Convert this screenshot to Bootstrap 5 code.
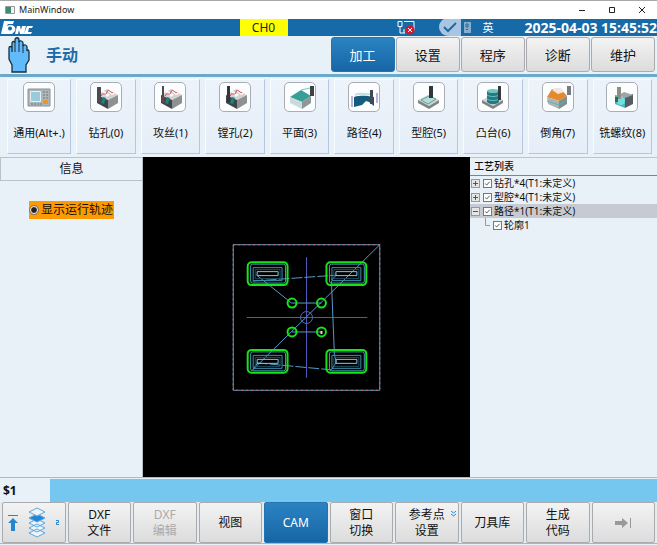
<!DOCTYPE html>
<html lang="zh-CN">
<head>
<meta charset="utf-8">
<meta name="viewport" content="width=device-width, initial-scale=1">
<title>MainWindow</title>
<link href="https://cdn.jsdelivr.net/npm/bootstrap@5.3.0/dist/css/bootstrap.min.css" rel="stylesheet">
<style>
body{font-family:"Noto Sans","Noto Sans CJK SC",sans-serif;font-size:12px;line-height:16px;color:#111;background:#e8f0f8}
svg{display:block}
button{font-family:inherit}
.window{padding-bottom:1px}
.titlebar{height:19px;background:#fff;border-top:1px solid #aaa;font-size:9px;padding:0 10px 0 5px;color:#222}
.titlebar button,.expander{background:none;border:0;padding:0}
.titlebar .controls{gap:20px}
.statusbar{height:17px;background:#176aa8;color:#fff}
.side{flex:1 1 0}
.channel{background:#ff0;color:#222;width:48px;font-size:12px;line-height:17px;margin-right:41px}
.clock{font-size:14px;font-weight:700;line-height:17px}
.ime{font-size:11px;margin:0 31px 0 10px}
.modebar{height:41px;border-bottom:3px solid #6aa9c9;padding:1px 2px 2px 6px}
.mode{font-family:"Noto Sans CJK SC",sans-serif;font-size:16px;font-weight:700;color:#1d6ba8;margin:0 0 0 14px}
.tabs{gap:1px}
.key{flex:1 1 0;min-width:0;padding:0;border:1px solid #a9abae;border-radius:3px;background:linear-gradient(#f3f3f3,#dcdcdc);color:#111;font-size:13px;line-height:16px}
.key.active{background:linear-gradient(#2b83c2,#1766a5);border-color:#2374b1;color:#fff}
.key:disabled{color:#aaa}
.tools{height:80px;padding:2px 5px 3px 7px;gap:5px}
.tool{flex:1 1 0;min-width:0;padding:2px 0 0;border:1px solid;border-color:#f8fbff #b7c6df #b7c6df #f8fbff;background:linear-gradient(#edf3fa,#e5eef8);font-size:11px;color:#111;white-space:nowrap;gap:13px}
.tool:first-child{flex-grow:1.08}
.pic{width:32px;height:30px;border:1px solid #aaaeb3;border-radius:5px;background:#fcfdff}
.info{width:143px;border-right:1px solid #b4bcc4}
.info h2{font-size:12px;line-height:22px;margin:0;border:1px solid #b9c1ca;border-right:0;text-align:center;font-weight:400}
.track{background:#f90;margin:20px 0 0 29px;padding:0 1px 0 0;height:18px;gap:2px}
.track input{appearance:none;width:8px;height:8px;border-radius:50%;background:#222;border:1px solid #fff;outline:1px solid #777;margin:0 1px}
.view{background:#000}
.tree{width:187px;font-size:10px}
.tree h2{font-size:10px;line-height:17px;padding-left:4px;margin:0;border-top:1px solid #bbc5cf;border-bottom:1px solid #7b858a}
.tree label{gap:1px}
.node{height:14px;gap:2px;padding-left:1px}
.node.selected{background:#c6cad2}
.expander{width:9px;height:9px;background:#e5e5e5;border:1px solid #999}
.tree input{appearance:none;width:9px;height:9px;margin:0 1px;border:1px solid #777;background:#fff url("data:image/svg+xml,%3Csvg xmlns='http://www.w3.org/2000/svg' viewBox='0 0 8 8'%3E%3Cpath d='M1.5 4 3 5.8 6.5 2' fill='none' stroke='%23444'/%3E%3C/svg%3E")}
.branch{padding-left:13px}
.command{height:25px;border-top:1px solid #b1b8bd;padding-top:1px}
.command label{width:50px;font-size:12px;font-weight:700;padding-left:3px}
.command input{background:#76c7ef;border:0;border-radius:0;height:23px;outline:0;min-width:0}
.softkeys{height:42px;background:#e6ebef;padding:0 2px;gap:2px;border-bottom:1px solid #b3b3b3}
.softkeys .key{font-size:12px;border-radius:2px}
.more{right:1px;top:8px}
</style>
<script src="https://cdn.jsdelivr.net/npm/bootstrap@5.3.0/dist/js/bootstrap.bundle.min.js"></script>
</head>
<body>
<svg width="0" height="0" class="position-absolute" aria-hidden="true">
<defs>
<g id="block"><path d="M4 11 14 5 25 11 15 16Z" fill="#d2d2d2"/><path d="M4 11 15 16V25L4 19Z" fill="#424547"/><path d="M15 16 25 11V19L15 25Z" fill="#8e9191"/><path d="M9 8 11 7 17 11 14 13ZM14 7 16 6 22 10 19 11Z" fill="#faf8f8"/><path d="M10 13 13 14 11 20 8 19Z" fill="#19857f"/><path d="M8 12C10 7 13 13 14 8S19 11 20 8" fill="none" stroke="#d8435b"/></g>
<g id="slab"><path d="M2 16 12 11 23 16 13 22Z" fill="#d0d3d0"/><path d="M2 16 13 22 23 16V19L13 25 2 19Z" fill="#7f8483"/></g>
<g id="pocket"><rect x="247" y="262" width="40" height="23" rx="4" stroke="#17e31b" stroke-width="2"/><rect x="250" y="264" width="35" height="19" rx="2" stroke="#4c9db1"/><path d="M252.500 267.500H281.500V280.500H252.500Z" stroke="#3f8fab"/><path d="M254.500 269.500H279.500V278.500H254.500Z" stroke="#1c4d60"/><path d="M256.500 271.500H277.500V275.500H256.500Z" stroke="#86c8e7"/></g>
</defs>
</svg>
<div class="window d-flex flex-column min-vh-100">
<header class="titlebar d-flex align-items-center">
<svg width="10" height="8" viewBox="0 0 10 8"><path fill="#f1f1f1" stroke="#999" d="M.5.5h9v7h-9z"/><path fill="#3c8b72" d="M1 1h5v6H1z"/></svg>
<span class="ms-1">MainWindow</span>
<div class="controls d-flex ms-auto">
<button aria-label="最小化"><svg width="10" height="8" viewBox="0 0 10 8" stroke="#222"><path d="M2 4.500h6"/></svg></button>
<button aria-label="最大化"><svg width="10" height="8" viewBox="0 0 10 8" fill="none" stroke="#222"><path d="M2.500 1.500h5v5h-5z"/></svg></button>
<button aria-label="关闭"><svg width="10" height="8" viewBox="0 0 10 8" stroke="#222"><path d="m2 1 6 6m0-6-6 6"/></svg></button>
</div>
</header>
<div class="statusbar d-flex">
<div class="w-50 d-flex">
<svg width="34" height="17" viewBox="0 0 34 17"><path fill="#fff" fill-rule="evenodd" d="M4 2h10l-1 3H8L7 7c5-3 10 1 8 5l-3 3H1zM8 9.500a2 2 0 1 0 4 0 2 2 0 0 0-4 0zM17 7h3l1 4 1-4h4l-2 8h-4l-1-4-1 4h-3zM27 7h6l-1 2h-3l-1 4h4l-1 2h-7z"/></svg>
<span class="channel text-center ms-auto">CH0</span>
</div>
<div class="w-50 d-flex align-items-center justify-content-end text-nowrap">
<svg width="18" height="15" viewBox="0 0 18 15" fill="none" stroke="#fff"><path d="M1 1.500h4v5H1zM7 1.500h10v9M3 7v6h5M7 9v4"/><circle cx="13" cy="10" r="4.500" fill="#d3172e" stroke="none"/><path d="m11 8 4 4m0-4-4 4"/></svg>
<svg class="ms-4" width="33" height="17" viewBox="0 0 33 17"><circle cx="9" cy="8" r="9" fill="#a9c5e1"/><path d="M10 0h12v17H10z" fill="#a9c5e1"/><path d="m5 8 4 4 8-8" fill="none" stroke="#1d6aa8" stroke-width="2"/><path d="M25 3h7v11h-7z" fill="#86adcc"/><path d="M27 5h2v3h-2zM27 10.500h2" stroke="#1d6aa8" fill="none"/></svg>
<span class="ime">英</span><time class="clock" datetime="2025-04-03T15:45:52">2025-04-03 15:45:52</time>
</div>
</div>
<div class="modebar d-flex">
<div class="side d-flex align-items-center">
<svg width="26" height="36" viewBox="0 0 26 36"><path d="M6 35V28L3 22V11c0-2 3-2 3 0v4-9c0-2 3-2 3 0v-3c0-3 4-3 4 0v2c1-2 4-1 4 1v3c1-2 4-1 4 1v4c1-2 2-1 2 1v8l-3 5v7z" fill="#61bafa" stroke="#182f3d" stroke-width="1.300"/><path d="M9 6v9M13 4v11M17 8v8" stroke="#182f3d"/></svg>
<h1 class="mode">手动</h1>
</div>
<nav class="tabs side d-flex" aria-label="模式">
<button class="key active">加工</button><button class="key">设置</button><button class="key">程序</button><button class="key">诊断</button><button class="key">维护</button>
</nav>
</div>
<nav class="tools d-flex" aria-label="工艺">
<button class="tool d-flex flex-column align-items-center"><span class="pic"><svg width="30" height="28" viewBox="-2 -1 30 28"><path fill="#adb6bb" stroke="#899298" d="M2 5h22v17H2z"/><path fill="#9acbdc" stroke="#e8eef0" d="M4.500 7.500h10v10h-10z"/><path d="M17 8h5M17 11h5M17 14h5M5 20h11" stroke="#6f797e" stroke-dasharray="2 1"/><path d="M17 16h5v4h-5z" fill="#e99828"/></svg></span>通用(Alt+.)</button>
<button class="tool d-flex flex-column align-items-center"><span class="pic"><svg width="30" height="28" viewBox="-2 -1 30 28"><use href="#block"/><path d="M4 3h4v14l-2 3-2-3z" fill="#4a4c4f"/></svg></span>钻孔(0)</button>
<button class="tool d-flex flex-column align-items-center"><span class="pic"><svg width="30" height="28" viewBox="-2 -1 30 28"><use href="#block"/><path d="M6 2v17" stroke="#4a4c4f" stroke-width="2"/><path d="M4 14h4M4 17h4" stroke="#9c3950"/></svg></span>攻丝(1)</button>
<button class="tool d-flex flex-column align-items-center"><span class="pic"><svg width="30" height="28" viewBox="-2 -1 30 28"><use href="#block"/><path d="M5 2h3v16H5z" fill="#333638"/></svg></span>镗孔(2)</button>
<button class="tool d-flex flex-column align-items-center"><span class="pic"><svg width="30" height="28" viewBox="-2 -1 30 28"><path d="m3 13 11-7 10 6-9 6z" fill="#389f98"/><path d="m3 13 12 5v7L3 19z" fill="#cbdada"/><path d="m15 18 9-6v7l-9 6z" fill="#8d9897"/><path d="M23 2h4v10h-4z" fill="#3d4247"/><path d="m14 6 9-2" stroke="#75c6c3"/></svg></span>平面(3)</button>
<button class="tool d-flex flex-column align-items-center"><span class="pic"><svg width="30" height="28" viewBox="-2 -1 30 28"><path d="M3 13c8-2 12-1 20 0v9l-5-4-3-1-4 4-8 2z" fill="#155b7b"/><path d="M4 11c7-4 12 2 18-2" stroke="#c0dfe4" fill="none" stroke-width="2"/><path d="M19 6h3v14h-3z" fill="#3f4a55"/><path d="M1 12v11M26 9v10" stroke="#746bb7"/></svg></span>路径(4)</button>
<button class="tool d-flex flex-column align-items-center"><span class="pic"><svg width="30" height="28" viewBox="-2 -1 30 28"><use href="#slab"/><path d="m5 16 8-4 7 3-8 5z" fill="#b5dcd4" stroke="#55a79a"/><path d="M13 2h4v12h-4z" fill="#303639"/></svg></span>型腔(5)</button>
<button class="tool d-flex flex-column align-items-center"><span class="pic"><svg width="30" height="28" viewBox="-2 -1 30 28"><use href="#slab"/><path d="M7 7h12v11c-3 3-9 3-12 0z" fill="#247a82"/><ellipse cx="13" cy="7" rx="6" ry="2" fill="#70c3bf"/><path d="M7 11c3 2 9 2 12 0M7 15c3 2 9 2 12 0" stroke="#69c1bf" fill="none"/><path d="M18 2h3v14h-3z" fill="#343b3f"/></svg></span>凸台(6)</button>
<button class="tool d-flex flex-column align-items-center"><span class="pic"><svg width="30" height="28" viewBox="-2 -1 30 28"><path d="m2 13 5-8h9l6 7-8 5z" fill="#e28a2c"/><path d="m7 6 3-2h6l3 4-6 2z" fill="#f1e5d8"/><path d="m2 13 12 4v8L3 20z" fill="#b1b3b3"/><path d="m14 17 8-5v8l-8 5z" fill="#85898a"/><path d="m2 17 12 4 8-5" stroke="#45bcc3" fill="none"/><path d="M22 2h4v9h-4z" fill="#777c7e"/></svg></span>倒角(7)</button>
<button class="tool d-flex flex-column align-items-center"><span class="pic"><svg width="30" height="28" viewBox="-2 -1 30 28"><path d="m6 11 10 2v11L6 20z" fill="#49b6bd"/><path d="m16 13 8-3v10l-8 4z" fill="#565d60"/><path d="m10 11 5-3 9 3-8 3z" fill="#9fa5a5"/><circle cx="12" cy="17" r="4" fill="#6de0df"/><path d="M8 3h4v12H8z" fill="#8a9085"/><path d="M6 13h3v5H6z" fill="#336d48"/></svg></span>铣螺纹(8)</button>
</nav>
<main class="d-flex flex-grow-1">
<section class="info flex-shrink-0">
<h2>信息</h2>
<label class="track d-inline-flex align-items-center"><input type="radio" checked>显示运行轨迹</label>
</section>
<section class="view flex-grow-1 d-flex" aria-label="刀具轨迹">
<svg class="w-100" viewBox="142 157 328 320" fill="none">
<path d="M232.500 244.500H379.500V390.500H232.500Z" stroke="#59a3bd"/><path d="M232.500 244.500H379.500V390.500H232.500Z" stroke="#d66078" stroke-dasharray="2 3"/>
<path d="M246 317.500H367M306 257V378" stroke="#5258bd"/>
<circle cx="306" cy="317.500" r="6" stroke="#5365bd"/>
<path d="M380 244 252 370M256 275 291 303H321M291 332H321M331 281 334 355 336 362 331 370M331 280 336 275M252 370 257 363" stroke="#559bc9"/>
<path d="M252 281 336 275M256 363 331 370" stroke="#559bc9" stroke-dasharray="11 2"/>
<use href="#pocket"/><use href="#pocket" x="79"/><use href="#pocket" y="88"/><use href="#pocket" x="79" y="88"/>
<g stroke="#17e31b" stroke-width="2"><circle cx="291.500" cy="303" r="4.500"/><circle cx="321" cy="303" r="4.500"/><circle cx="291.500" cy="332" r="4.500"/><circle cx="321" cy="332" r="4.500"/></g>
<path d="M320 331h2v3h-2z" fill="#e8e39a"/>
</svg>
</section>
<section class="tree flex-shrink-0">
<h2>工艺列表</h2>
<div class="node d-flex align-items-center"><button class="expander" aria-label="展开"><svg width="7" height="7" viewBox="0 0 7 7" stroke="#555"><path d="M1 3.500h5M3.500 1v5"/></svg></button><label class="d-flex align-items-center"><input type="checkbox" checked>钻孔*4(T1:未定义)</label></div>
<div class="node d-flex align-items-center"><button class="expander" aria-label="展开"><svg width="7" height="7" viewBox="0 0 7 7" stroke="#555"><path d="M1 3.500h5M3.500 1v5"/></svg></button><label class="d-flex align-items-center"><input type="checkbox" checked>型腔*4(T1:未定义)</label></div>
<div class="node selected d-flex align-items-center"><button class="expander" aria-label="折叠"><svg width="7" height="7" viewBox="0 0 7 7" stroke="#555"><path d="M1 3.500h5"/></svg></button><label class="d-flex align-items-center"><input type="checkbox" checked>路径*1(T1:未定义)</label></div>
<div class="node branch d-flex align-items-center"><svg width="7" height="14" viewBox="0 0 7 14" fill="none" stroke="#999"><path d="M2.500 0v7.500H7"/></svg><label class="d-flex align-items-center"><input type="checkbox" checked>轮廓1</label></div>
</section>
</main>
<div class="command d-flex align-items-center"><label for="cmd">$1</label><input id="cmd" class="flex-grow-1" type="text"></div>
<footer class="softkeys d-flex">
<button class="key d-flex align-items-center justify-content-around" aria-label="上一级"><svg width="12" height="18" viewBox="0 0 12 18" fill="#2586cf"><path d="M1 1h10v1H1zM6 4l5 5H8v8H4V9H1z"/></svg><svg width="20" height="32" viewBox="0 0 20 32" fill="#eef4f9" stroke="#5aa7df"><path d="m2 26 8-4 8 4-8 4zM2 21l8-4 8 4-8 4zM2 16l8-4 8 4-8 4z"/><path d="m2 11 8-4 8 4-8 4z" fill="#2487d6"/><path d="m2 5 8-4 8 4-8 4z"/></svg><svg width="5" height="7" viewBox="0 0 5 7" fill="none" stroke="#2487d6"><path d="M1 1.500h2.500v2h-2v2H4"/></svg></button>
<button class="key">DXF<br>文件</button>
<button class="key" disabled>DXF<br>编辑</button>
<button class="key">视图</button>
<button class="key active">CAM</button>
<button class="key">窗口<br>切换</button>
<button class="key position-relative">参考点<br>设置<svg class="more position-absolute" width="7" height="7" viewBox="0 0 7 7" fill="none" stroke="#2487d6"><path d="m1 0 2.500 2L6 0M1 3l2.500 2L6 3"/></svg></button>
<button class="key">刀具库</button>
<button class="key">生成<br>代码</button>
<button class="key d-flex align-items-center justify-content-center" aria-label="下一页"><svg width="18" height="12" viewBox="0 0 18 12"><path d="M1 4h7V1l6 5-6 5V8H1z" fill="#999"/><path d="M16.500 1v10" stroke="#999"/></svg></button>
</footer>
</div>
</body>
</html>
